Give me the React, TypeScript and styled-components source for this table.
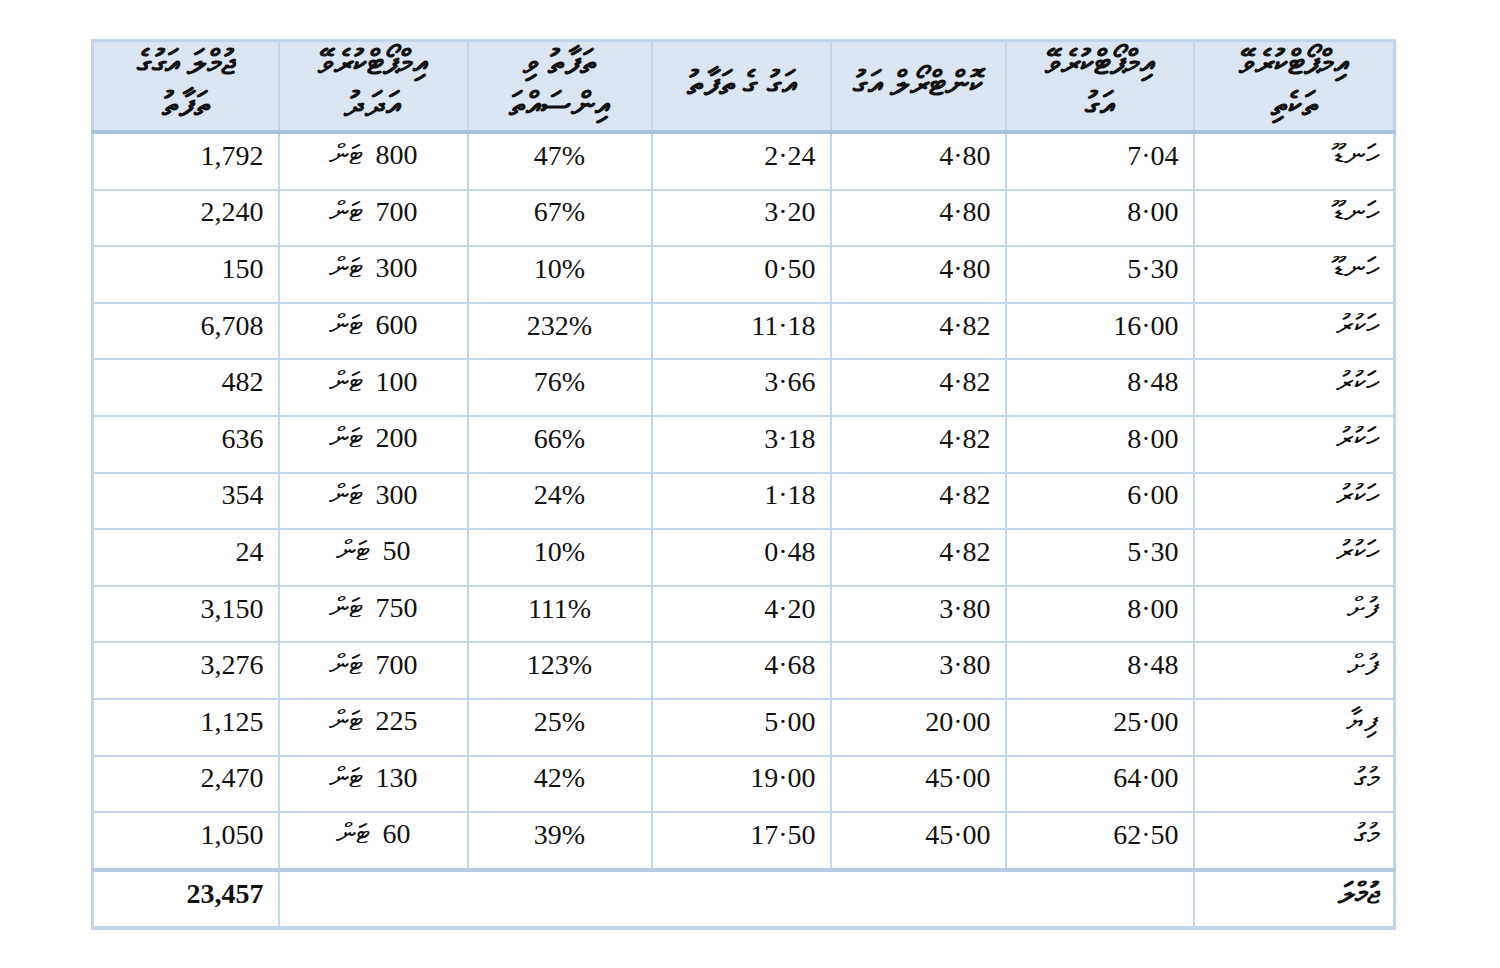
import React from "react";
import styled, { createGlobalStyle } from "styled-components";

const Global = createGlobalStyle`
  html, body { margin: 0; padding: 0; background: #ffffff; }
  body { font-family: "Liberation Serif", "DejaVu Serif", serif; color: #111; }
`;

const Page = styled.div`
  padding: 39px 0 0 91px;
  width: 1302px;
`;

const Table = styled.table`
  direction: rtl;
  width: 1302px;
  border-collapse: collapse;
  table-layout: fixed;
  border: 3px solid #c3d5ea;
  font-family: "Liberation Serif", "DejaVu Serif", serif;
`;

const Col = styled.col<{ $w: number }>`
  width: ${(p) => p.$w}px;
`;

const HeadCell = styled.th`
  height: 84px;
  background: #dce6f2;
  border-left: 2px solid #c3d5ea;
  border-right: 2px solid #c3d5ea;
  border-bottom: 4px solid #a9c2df;
  font-size: 34px;
  font-weight: bold;
  line-height: 42px;
  text-align: center;
  vertical-align: middle;
  padding: 0 4px 4px;
  white-space: nowrap;
  overflow: hidden;
`;

const Cell = styled.td<{ $align?: "right" | "center"; $ltr?: boolean }>`
  height: 43.6px;
  border: 2px solid #c3d5ea;
  font-size: 28px;
  text-align: ${(p) => p.$align ?? "right"};
  direction: ${(p) => (p.$ltr ? "ltr" : "rtl")};
  vertical-align: middle;
  padding: 0 14px 11px 14px;
  white-space: nowrap;
`;

const TotalCell = styled.td<{ $bold?: boolean; $ltr?: boolean }>`
  height: 44px;
  border: 2px solid #c3d5ea;
  border-top: 4px solid #b5cbe4;
  border-bottom: 4px solid #c3d5ea;
  font-size: 28px;
  font-weight: ${(p) => (p.$bold ? "bold" : "normal")};
  text-align: right;
  direction: ${(p) => (p.$ltr ? "ltr" : "rtl")};
  vertical-align: middle;
  padding: 0 14px 10px 14px;
`;

const Label = styled.span<{ $bold?: boolean }>`
  font-size: 30px;
  font-weight: ${(p) => (p.$bold ? "bold" : "normal")};
`;

const Unit = styled.span`
  display: inline-block;
  margin-right: 14px;
  font-size: 28px;
`;

const widths = [201, 188, 175, 179, 184, 189, 186];

const headers: [string, string?][] = [
  ["އިމްޕޯޓްކުރެވޭ", "ތަކެތި"],
  ["އިމްޕޯޓްކުރެވޭ", "އަގު"],
  ["ކޮންޓްރޯލް އަގު"],
  ["އަގު ގެ ތަފާތު"],
  ["ތަފާތު ވި", "އިންސައްތަ"],
  ["އިމްޕޯޓްކުރެވޭ", "އަދަދު"],
  ["ޖުމްލަ އަގުގެ", "ތަފާތު"],
];

type Row = [string, string, string, string, string, string, string];

const rows: Row[] = [
  ["ހަނޑޫ", "7·04", "4·80", "2·24", "47%", "800", "1,792"],
  ["ހަނޑޫ", "8·00", "4·80", "3·20", "67%", "700", "2,240"],
  ["ހަނޑޫ", "5·30", "4·80", "0·50", "10%", "300", "150"],
  ["ހަކުރު", "16·00", "4·82", "11·18", "232%", "600", "6,708"],
  ["ހަކުރު", "8·48", "4·82", "3·66", "76%", "100", "482"],
  ["ހަކުރު", "8·00", "4·82", "3·18", "66%", "200", "636"],
  ["ހަކުރު", "6·00", "4·82", "1·18", "24%", "300", "354"],
  ["ހަކުރު", "5·30", "4·82", "0·48", "10%", "50", "24"],
  ["ފުށް", "8·00", "3·80", "4·20", "111%", "750", "3,150"],
  ["ފުށް", "8·48", "3·80", "4·68", "123%", "700", "3,276"],
  ["ފިޔާ", "25·00", "20·00", "5·00", "25%", "225", "1,125"],
  ["މުގު", "64·00", "45·00", "19·00", "42%", "130", "2,470"],
  ["މުގު", "62·50", "45·00", "17·50", "39%", "60", "1,050"],
];

export default function App() {
  return (
    <>
      <Global />
      <Page>
        <Table dir="rtl">
          <colgroup>
            {widths.map((w, i) => (
              <Col key={i} $w={w} />
            ))}
          </colgroup>
          <thead>
            <tr>
              {headers.map((h, i) => (
                <HeadCell key={i}>
                  {h[0]}
                  {h[1] ? (
                    <>
                      <br />
                      {h[1]}
                    </>
                  ) : null}
                </HeadCell>
              ))}
            </tr>
          </thead>
          <tbody>
            {rows.map((r, i) => (
              <tr key={i}>
                <Cell $align="right">
                  <Label>{r[0]}</Label>
                </Cell>
                <Cell $ltr>{r[1]}</Cell>
                <Cell $ltr>{r[2]}</Cell>
                <Cell $ltr>{r[3]}</Cell>
                <Cell $align="center">{r[4]}</Cell>
                <Cell $align="center">
                  {r[5]}
                  <Unit>ޓަން</Unit>
                </Cell>
                <Cell $ltr>{r[6]}</Cell>
              </tr>
            ))}
            <tr>
              <TotalCell>
                <Label $bold>ޖުމްލަ</Label>
              </TotalCell>
              <TotalCell colSpan={5} />
              <TotalCell $bold $ltr>
                23,457
              </TotalCell>
            </tr>
          </tbody>
        </Table>
      </Page>
    </>
  );
}
